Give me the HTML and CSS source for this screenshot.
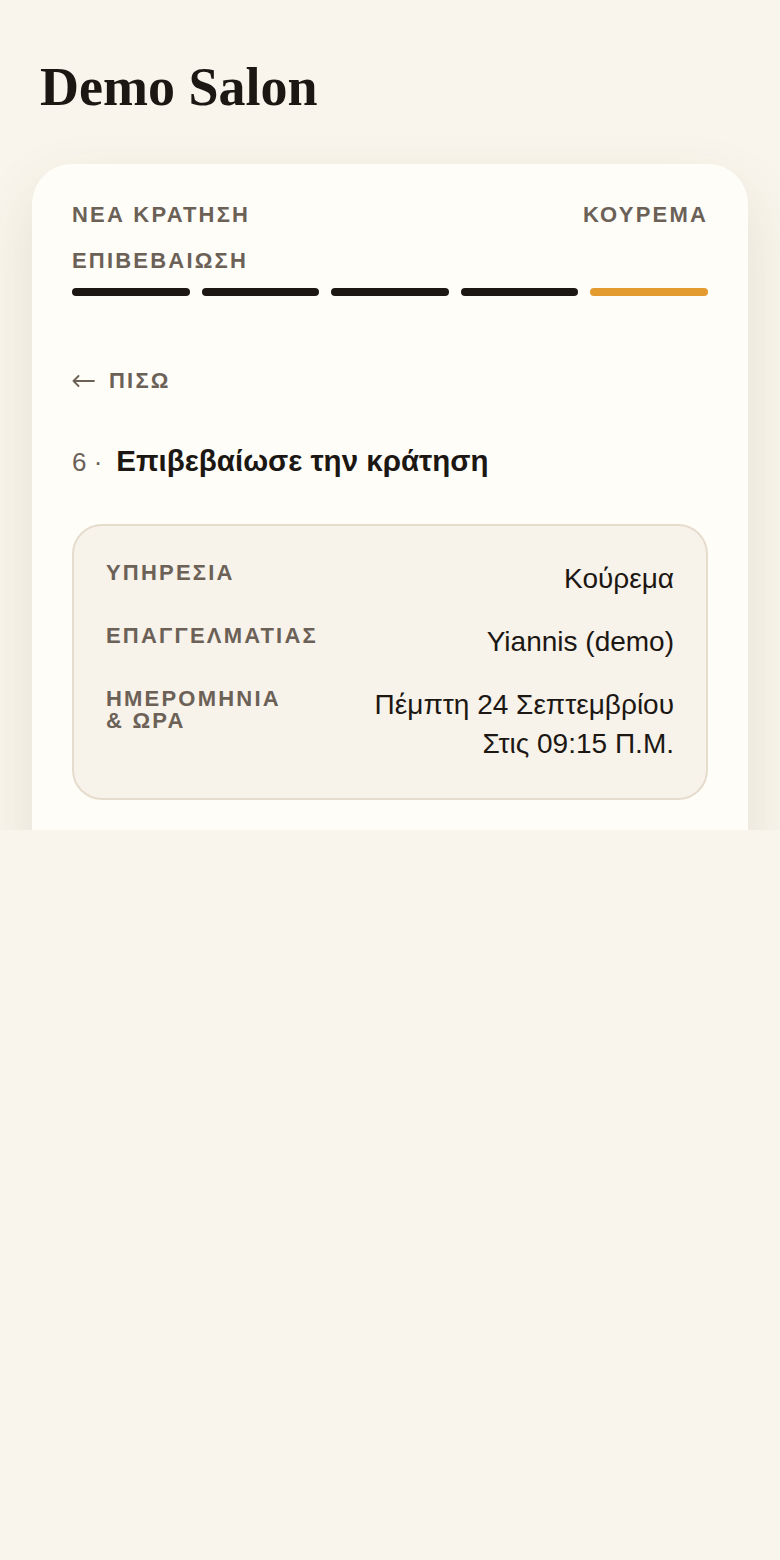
FILE: index.html
```html
<!DOCTYPE html>
<html lang="el">
<head>
<meta charset="utf-8">
<title>Demo Salon</title>
<link rel="stylesheet" href="styles.css">
</head>
<body>
<div class="page">
  <h1 class="brand">Demo Salon</h1>
  <main class="card">
    <div class="steps-head">
      <span class="eyebrow">ΝΕΑ ΚΡΑΤΗΣΗ</span>
      <span class="eyebrow">ΚΟΥΡΕΜΑ</span>
    </div>
    <div class="eyebrow step-name">ΕΠΙΒΕΒΑΙΩΣΗ</div>
    <div class="progress">
      <span class="seg done"></span>
      <span class="seg done"></span>
      <span class="seg done"></span>
      <span class="seg done"></span>
      <span class="seg current"></span>
    </div>
    <a class="back" href="#">
      <svg class="arrow" width="23" height="12" viewBox="0 0 23 12" aria-hidden="true">
        <path d="M22 6H1.5M6.5 1L1.5 6l5 5" fill="none" stroke="currentColor" stroke-width="1.8" stroke-linecap="round" stroke-linejoin="round"/>
      </svg>
      <span class="back-text">ΠΙΣΩ</span>
    </a>
    <h2 class="title"><span class="num">6 ·</span><span>Επιβεβαίωσε την κράτηση</span></h2>
    <div class="summary">
      <div class="row">
        <div class="label">ΥΠΗΡΕΣΙΑ</div>
        <div class="value">Κούρεμα</div>
      </div>
      <div class="row">
        <div class="label">ΕΠΑΓΓΕΛΜΑΤΙΑΣ</div>
        <div class="value">Yiannis (demo)</div>
      </div>
      <div class="row">
        <div class="label">ΗΜΕΡΟΜΗΝΙΑ &amp; ΩΡΑ</div>
        <div class="value">Πέμπτη 24 Σεπτεμβρίου<br>Στις 09:15 Π.Μ.</div>
      </div>
    </div>
  </main>
</div>
</body>
</html>
```

FILE: styles.css
```css
html, body {
  margin: 0;
  padding: 0;
  background: #f9f5ec;
}
body {
  font-family: "Liberation Sans", Arial, sans-serif;
  color: #1c1713;
}
.page {
  height: 830px;
  overflow: hidden;
  padding: 56px 32px 0;
  box-sizing: border-box;
}
.brand {
  margin: 0 0 44px;
  padding: 0 8px;
  font-family: "Liberation Serif", "Times New Roman", serif;
  font-weight: 700;
  font-size: 54px;
  line-height: 1.18;
  color: #1c1713;
}
.card {
  display: block;
  background: #fffdf8;
  border-radius: 40px;
  padding: 40px 40px 120px;
  box-shadow: 0 24px 60px rgba(90, 70, 40, 0.12);
}
.steps-head {
  display: flex;
  justify-content: space-between;
}
.eyebrow {
  font-size: 22px;
  line-height: 22px;
  font-weight: 700;
  letter-spacing: 2.2px;
  color: #6b6157;
}
.step-name {
  margin-top: 24px;
}
.progress {
  display: flex;
  gap: 12px;
  margin-top: 16px;
}
.seg {
  flex: 1;
  height: 8px;
  border-radius: 4px;
  background: #1c1713;
}
.seg.current {
  background: #e39a2e;
}
.back {
  display: flex;
  align-items: center;
  gap: 14px;
  margin-top: 74px;
  text-decoration: none;
  color: #6b6157;
  font-size: 22px;
  line-height: 22px;
  font-weight: 700;
  letter-spacing: 2.2px;
}
.arrow {
  display: block;
  flex: none;
}
.title {
  display: flex;
  align-items: baseline;
  gap: 14px;
  margin: 51px 0 0;
  font-size: 29.5px;
  line-height: 36px;
  font-weight: 700;
  color: #1c1713;
}
.num {
  font-weight: 400;
  font-size: 26px;
  color: #6b6157;
}
.summary {
  margin-top: 44px;
  background: #f7f2ea;
  border: 2px solid #e6dccd;
  border-radius: 30px;
  padding: 33px 32px 35px;
  display: flex;
  flex-direction: column;
  gap: 24px;
}
.row {
  display: flex;
  justify-content: space-between;
  align-items: flex-start;
  gap: 72px;
}
.label {
  flex: 1 1 auto;
  font-size: 22px;
  line-height: 22px;
  font-weight: 700;
  letter-spacing: 2.2px;
  color: #6b6157;
  padding-top: 3px;
}
.value {
  flex: none;
  text-align: right;
  font-size: 28px;
  line-height: 39px;
  color: #1c1713;
}
```
